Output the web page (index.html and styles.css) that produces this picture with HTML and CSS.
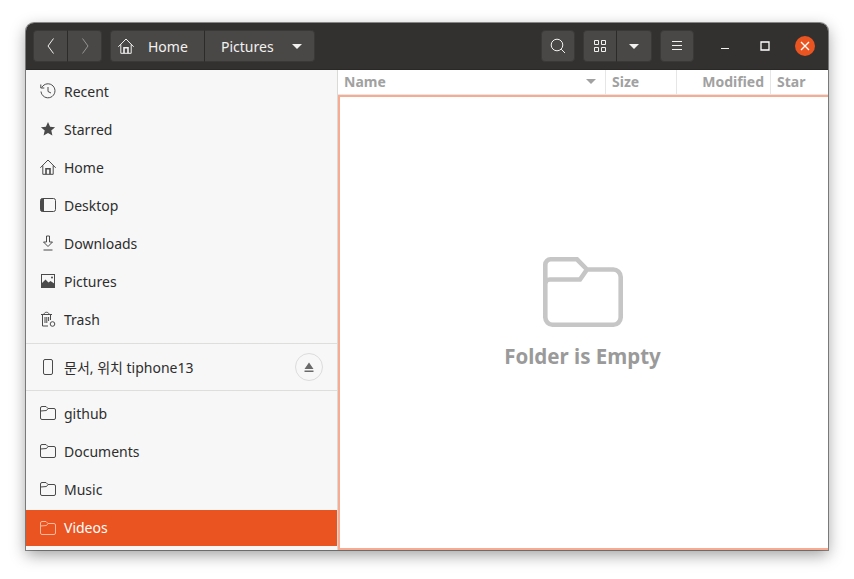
FILE: index.html
```html
<!DOCTYPE html>
<html>
<head>
<meta charset="UTF-8">
<title>Pictures</title>
<link rel="stylesheet" href="styles.css">
</head>
<body>
<div class="window">
  <header class="headerbar">
    <div class="group">
      <button class="btn btn-nav"><svg width="10" height="18" viewBox="0 0 10 18"><path d="M7.500 1.500 2 9l5.500 7.500" class="line"/></svg></button>
      <button class="btn btn-nav dim"><svg width="10" height="18" viewBox="0 0 10 18"><path d="M2.500 1.500 8 9l-5.500 7.500" class="line"/></svg></button>
    </div>
    <div class="group path">
      <button class="btn crumb-home">
        <svg width="16" height="16" viewBox="0 0 16 16"><path d="M.3 8.800 8 1l7.700 7.800M2.800 6.500v8.800h10.400V6.500" class="line"/><path d="M6 15.300V9.800h4v5.500" class="thick"/></svg>
        <span>Home</span>
      </button>
      <button class="btn crumb-pics"><span>Pictures</span><i class="caret"></i></button>
    </div>
    <div class="spacer"></div>
    <button class="btn btn-icon"><svg width="16" height="16" viewBox="0 0 16 16"><circle cx="7" cy="7" r="5.800" class="line"/><path d="m11.200 11.200 3.800 3.800" class="line"/></svg></button>
    <div class="group">
      <button class="btn btn-icon"><svg width="14" height="14" viewBox="0 0 14 14"><path d="M1.500 1.500h4v4h-4zM8.500 1.500h4v4h-4zM1.500 8.500h4v4h-4zM8.500 8.500h4v4h-4z" class="line"/></svg></button>
      <button class="btn btn-icon"><i class="caret"></i></button>
    </div>
    <button class="btn btn-icon"><svg width="12" height="10" viewBox="0 0 12 10"><path d="M1 .5h10M1 4.500h10M1 8.500h10" class="line"/></svg></button>
    <div class="controls">
      <span class="ctl"><svg width="10" height="10" viewBox="0 0 10 10"><path d="M1 7.500h8" class="line"/></svg></span>
      <span class="ctl"><svg width="10" height="10" viewBox="0 0 10 10"><path d="M1 1h8v8H1z" class="line heavy"/></svg></span>
      <span class="ctl close"><svg width="10" height="10" viewBox="0 0 10 10"><path d="m1 1 8 8M9 1l-8 8" class="line heavy"/></svg></span>
    </div>
  </header>

  <div class="main">
    <aside class="sidebar">
      <ul class="places">
        <li class="row"><svg class="ico" width="16" height="16" viewBox="0 0 16 16"><path d="M1.800 4.500A7 7 0 1 1 1 8.500M.8 1.500v3.500h3.500M8 4v4.500l3 1.500" class="stroke"/></svg>Recent</li>
        <li class="row"><svg class="ico" width="16" height="16" viewBox="0 0 16 16"><path d="m8 1 2.100 4.700 5 .5-3.800 3.300 1.100 5L8 11.900l-4.400 2.600 1.100-5L.9 6.200l5-.5z" class="fill"/></svg>Starred</li>
        <li class="row"><svg class="ico" width="16" height="16" viewBox="0 0 16 16"><path d="M.3 8.800 8 1l7.700 7.800M2.800 6.500v8.800h10.400V6.500" class="stroke"/><path d="M6 15.300V9.800h4v5.500" class="stroke-bold"/></svg>Home</li>
        <li class="row"><svg class="ico" width="16" height="16" viewBox="0 0 16 16"><rect x=".5" y="1.500" width="15" height="13" rx="2" class="stroke"/><path d="M.5 3.500a2 2 0 0 1 2-2H4v13H2.500a2 2 0 0 1-2-2z" class="fill"/></svg>Desktop</li>
        <li class="row"><svg class="ico" width="16" height="16" viewBox="0 0 16 16"><path d="M6.500 1h3v6h3L8 11.500 3.500 7h3zM3.500 15h9" class="stroke"/></svg>Downloads</li>
        <li class="row"><svg class="ico" width="16" height="16" viewBox="0 0 16 16"><rect x="1.500" y="1.500" width="13" height="13" class="stroke"/><path d="M1 15v-4l4.500-4.500 3 3 2-1.500 4.500 3v4z" class="fill"/><circle cx="12" cy="4.500" r="1" class="fill"/></svg>Pictures</li>
        <li class="row"><svg class="ico" width="16" height="16" viewBox="0 0 16 16"><path d="M1 3.500h11M4 3.500c0-3 5-3 5 0M2.500 3.500v11.500H8M10.500 3.500V9M5 6v6M6.800 6v6M8.600 6v4" class="stroke"/><circle cx="12.500" cy="13" r="2.300" class="stroke"/></svg>Trash</li>
      </ul>
      <div class="sep sep-first"></div>
      <div class="row device">
        <svg class="ico" width="16" height="16" viewBox="0 0 16 16"><rect x="3.500" y=".5" width="9" height="15" rx="1.500" class="stroke"/></svg>
        <span class="device-name">문서, 위치 tiphone13</span>
        <span class="eject"><svg width="10" height="11" viewBox="0 0 10 11"><path d="M5 .5 9.500 7H.5zM.5 8.500h9V10h-9z" class="eject-mark"/></svg></span>
      </div>
      <div class="sep"></div>
      <ul class="places">
        <li class="row"><svg class="ico" width="16" height="16" viewBox="0 0 16 16"><path d="M.5 3a1.500 1.500 0 0 1 1.500-1.500h4L8 3.500h6a1.500 1.500 0 0 1 1.500 1.500v8a1.500 1.500 0 0 1-1.500 1.500H2A1.500 1.500 0 0 1 .5 13zM.5 6 6.500 5.500 8 3.500" class="stroke"/></svg>github</li>
        <li class="row"><svg class="ico" width="16" height="16" viewBox="0 0 16 16"><path d="M.5 3a1.500 1.500 0 0 1 1.500-1.500h4L8 3.500h6a1.500 1.500 0 0 1 1.500 1.500v8a1.500 1.500 0 0 1-1.500 1.500H2A1.500 1.500 0 0 1 .5 13zM.5 6 6.500 5.500 8 3.500" class="stroke"/></svg>Documents</li>
        <li class="row"><svg class="ico" width="16" height="16" viewBox="0 0 16 16"><path d="M.5 3a1.500 1.500 0 0 1 1.500-1.500h4L8 3.500h6a1.500 1.500 0 0 1 1.500 1.500v8a1.500 1.500 0 0 1-1.500 1.500H2A1.500 1.500 0 0 1 .5 13zM.5 6 6.500 5.500 8 3.500" class="stroke"/></svg>Music</li>
        <li class="row selected"><svg class="ico" width="16" height="16" viewBox="0 0 16 16"><path d="M.5 3a1.500 1.500 0 0 1 1.500-1.500h4L8 3.500h6a1.500 1.500 0 0 1 1.500 1.500v8a1.500 1.500 0 0 1-1.500 1.500H2A1.500 1.500 0 0 1 .5 13zM.5 6 6.500 5.500 8 3.500" class="stroke"/></svg>Videos</li>
      </ul>
    </aside>

    <section class="content">
      <div class="columns">
        <div class="col col-name">Name<i class="caret sort"></i></div>
        <div class="col col-size">Size</div>
        <div class="col col-modified">Modified</div>
        <div class="col col-star">Star</div>
      </div>
      <div class="view">
        <svg class="empty-icon" width="80" height="70" viewBox="0 0 80 70"><path d="M2.300 8A5.500 5.500 0 0 1 8 2.300h26l10 10.200H70a7.500 7.500 0 0 1 7.700 7.500V60a7.500 7.500 0 0 1-7.700 7.700H10A7.500 7.500 0 0 1 2.300 60zM2.300 27c0-2.500 2-4.500 4.500-4.500H37l7-10"/></svg>
        <div class="empty-text">Folder is Empty</div>
      </div>
    </section>
  </div>
</div>
</body>
</html>
```

FILE: styles.css
```css
html, body { margin: 0; height: 100%; background: #fff; }
body {
    padding: 23px 26px 29px;
    box-sizing: border-box;
    font-family: "Noto Sans", "Noto Sans CJK KR", sans-serif;
    font-size: 14px;
    overflow: hidden;
}
ul { list-style: none; margin: 0; padding: 0; }

.window {
    height: 527px;
    display: flex;
    flex-direction: column;
    border-radius: 8px 8px 0 0;
    background: #fff;
    box-shadow: 0 0 0 1px rgba(0,0,0,.42), 0 5px 16px rgba(0,0,0,.38);
    overflow: hidden;
}

/* header */
.headerbar {
    flex: 0 0 46px;
    display: flex;
    align-items: center;
    gap: 8px;
    padding: 0 0 0 7px;
    background: #333130;
    border-bottom: 1px solid #292827;
}
.spacer { flex: 1; }
.group { display: flex; }
.btn {
    height: 32px;
    padding: 0;
    margin: 0;
    display: flex;
    align-items: center;
    justify-content: center;
    color: #f2f1f0;
    font: inherit;
    background: #4a4846;
    border: 1px solid #3b3938;
    border-radius: 4px;
}
.group .btn:not(:first-child) { border-radius: 0 4px 4px 0; border-left: 0; }
.group .btn:not(:last-child) { border-radius: 4px 0 0 4px; border-right-color: #2d2b2a; }
.btn-nav { width: 35px; }
.btn-nav.dim { width: 34px; }
.btn-nav.dim svg { opacity: .45; }
.btn-icon { width: 34px; }
.group .btn-icon:last-child { width: 35px; }
.crumb-home { width: 95px; justify-content: flex-start; padding-left: 7px; gap: 14px; }
.crumb-pics { width: 110px; justify-content: flex-start; padding-left: 16px; gap: 18px; }
.caret {
    display: block;
    width: 0;
    height: 0;
    border: 5px solid transparent;
    border-top: 5px solid #f2f1f0;
    border-bottom: 0;
}
.line { fill: none; stroke: #f2f1f0; stroke-width: 1; }
.line.heavy { stroke: #fff; stroke-width: 1.3; }
.thick { fill: none; stroke: #f2f1f0; stroke-width: 1.6; }
.controls { display: flex; align-items: center; margin-left: 3px; }
.ctl {
    width: 40px;
    height: 20px;
    display: flex;
    align-items: center;
    justify-content: center;
}
.ctl.close {
    width: 20px;
    margin: 0 13px 0 10px;
    border-radius: 50%;
    background: #e95420;
}

/* sidebar */
.main { flex: 1; display: flex; min-height: 0; }
.sidebar {
    flex: 0 0 311px;
    padding-top: 3px;
    background: #f7f7f7;
    border-right: 1px solid #dcdad8;
    color: #2e2e2e;
    overflow: hidden;
}
.row {
    height: 36px;
    margin-bottom: 2px;
    display: flex;
    align-items: center;
    padding-left: 14px;
    gap: 8px;
}
.row.selected {
    box-sizing: border-box;
    padding-bottom: 1px;
    background: #e95420;
    color: #fff;
    margin: 3px 0 0;
}
.row.selected .stroke { stroke: #ffb79d; }
.ico { flex: none; }
.stroke { fill: none; stroke: #4a4a4a; stroke-width: 1; }
.stroke-bold { fill: none; stroke: #4a4a4a; stroke-width: 1.6; }
.fill { fill: #4a4a4a; }
.sep { height: 1px; background: #dededc; margin: 4px 0; }
.sep-first { margin-top: 6px; }
.device { height: 38px; margin: 0; padding-right: 14px; }
.device-name { flex: 1; }
.eject {
    width: 28px;
    height: 28px;
    display: flex;
    align-items: center;
    justify-content: center;
    border: 1px solid #dcdcdc;
    border-radius: 50%;
    box-sizing: border-box;
}
.eject-mark { fill: #6a6a6a; }

/* file view */
.content { flex: 1; display: flex; flex-direction: column; min-width: 0; }
.columns {
    flex: 0 0 25px;
    display: flex;
    font-weight: 700;
    color: #a1a1a1;
    background: #fff;
    box-sizing: border-box;
    border-bottom: 1px solid #e6e6e6;
}
.col {
    display: flex;
    align-items: center;
    box-sizing: border-box;
    border-right: 1px solid #e6e6e6;
    height: 24px;
    padding: 0 6px 2px;
}
.col-name { width: 268px; justify-content: space-between; padding-right: 9px; }
.col-size { width: 71px; }
.col-modified { width: 94px; justify-content: flex-end; }
.col-star { flex: 1; border-right: 0; }
.sort { border-top-color: #a1a1a1; }
.view {
    flex: 1;
    display: flex;
    flex-direction: column;
    align-items: center;
    justify-content: center;
    gap: 15px;
    border: 2px solid #f9ab92;
    border-right: 0;
    padding: 0 3px 18px 0;
}
.empty-icon path { fill: none; stroke: #c6c6c6; stroke-width: 4.600; }
.empty-text { font-size: 20.500px; font-weight: 700; color: #9a9a9a; }
```
